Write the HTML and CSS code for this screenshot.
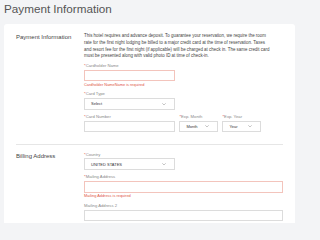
FILE: index.html
```html
<!DOCTYPE html>
<html lang="en">
<head>
<meta charset="utf-8">
<title>Payment Information</title>
<link rel="stylesheet" href="styles.css">
</head>
<body>
<h1 class="page-title">Payment Information</h1>
<div class="card">
  <section class="section section-first">
    <div class="section-label">Payment Information</div>
    <div class="section-body">
      <p class="notice">This hotel requires and advance deposit. To guarantee your reservation, we require the room<br>rate for the first night lodging be billed to a major credit card at the time of reservation. Taxes<br>and resort fee for the first night (if applicable) will be charged at check in. The same credit card<br>must be presented along with valid photo ID at time of check-in.</p>
      <div class="field half has-error">
        <div class="field-label"><span class="req">*</span>Cardholder Name</div>
        <input class="control" type="text">
        <div class="err-msg">Cardholder NameName is required</div>
      </div>
      <div class="field half">
        <div class="field-label"><span class="req">*</span>Card Type</div>
        <div class="control select"><span>Select</span><svg class="chev" viewBox="0 0 4 2.4"><polyline points="0.3,0.3 2,2 3.7,0.3"/></svg></div>
      </div>
      <div class="row">
        <div class="field half">
          <div class="field-label"><span class="req">*</span>Card Number</div>
          <input class="control" type="text">
        </div>
        <div class="field small">
          <div class="field-label"><span class="req">*</span>Exp. Month</div>
          <div class="control select"><span>Month</span><svg class="chev" viewBox="0 0 4 2.4"><polyline points="0.3,0.3 2,2 3.7,0.3"/></svg></div>
        </div>
        <div class="field small">
          <div class="field-label"><span class="req">*</span>Exp. Year</div>
          <div class="control select"><span>Year</span><svg class="chev" viewBox="0 0 4 2.4"><polyline points="0.3,0.3 2,2 3.7,0.3"/></svg></div>
        </div>
      </div>
    </div>
  </section>
  <section class="section">
    <div class="section-label">Billing Address</div>
    <div class="section-body">
      <div class="field half">
        <div class="field-label"><span class="req">*</span>Country</div>
        <div class="control select"><span>UNITED STATES</span><svg class="chev" viewBox="0 0 4 2.4"><polyline points="0.3,0.3 2,2 3.7,0.3"/></svg></div>
      </div>
      <div class="field has-error">
        <div class="field-label"><span class="req">*</span>Mailing Address</div>
        <input class="control" type="text">
        <div class="err-msg">Mailing Address is required</div>
      </div>
      <div class="field">
        <div class="field-label">Mailing Address 2</div>
        <input class="control" type="text">
      </div>
    </div>
  </section>
</div>
</body>
</html>
```

FILE: styles.css
```css
html, body {
  margin: 0;
  padding: 0;
}
body {
  background: #f3f4f6;
  font-family: "Liberation Sans", Arial, sans-serif;
  color: #333;
  width: 299px;
  height: 223px;
  overflow: hidden;
}
.page-title {
  margin: 0 0 7px 0;
  padding: 1px 4px 0 4px;
  font-size: 11.7px;
  line-height: 16px;
  font-weight: normal;
  color: #555;
}
.card {
  margin: 0 4px;
  background: #fff;
  border-radius: 3px;
  padding: 0 12px;
}
.section {
  display: flex;
  padding: 9.4px 0 6.7px 0;
  border-bottom: 1px solid #e6e6e6;
}
.section + .section {
  padding-top: 7px;
  border-bottom: none;
}
.section-label {
  width: 68px;
  flex: none;
  font-size: 6px;
  line-height: 8.6px;
  color: #444;
}
.section-body {
  flex: 1;
  min-width: 0;
}
.notice {
  margin: 0 0 2.9px 0;
  font-size: 4.45px;
  line-height: 6.67px;
  color: #444;
  white-space: nowrap;
}
.field {
  margin-bottom: 4.6px;
}
.field.half {
  width: 91px;
}
.field.small {
  width: 38.7px;
}
.row {
  display: flex;
  gap: 4.4px;
}
.field-label {
  font-size: 4.2px;
  line-height: 5.6px;
  color: #8a8a8a;
  margin-bottom: 1px;
}
.req {
  color: #e0453a;
}
.control {
  display: flex;
  align-items: center;
  box-sizing: border-box;
  width: 100%;
  height: 11.6px;
  margin: 0;
  padding: 0 6px;
  border: 1px solid #dcdcdc;
  border-radius: 0;
  background: #fff;
  font-family: inherit;
  font-size: 4px;
  color: #333;
  outline: none;
}
.has-error .control {
  border-color: #f3c4bc;
}
.err-msg {
  margin-top: 0.7px;
  font-size: 3.9px;
  line-height: 5px;
  color: #e05546;
}
.select {
  justify-content: space-between;
  padding-right: 8px;
}
.chev {
  width: 4px;
  height: 2.4px;
  fill: none;
  stroke: #8a8a8a;
  stroke-width: 0.5;
}
```
